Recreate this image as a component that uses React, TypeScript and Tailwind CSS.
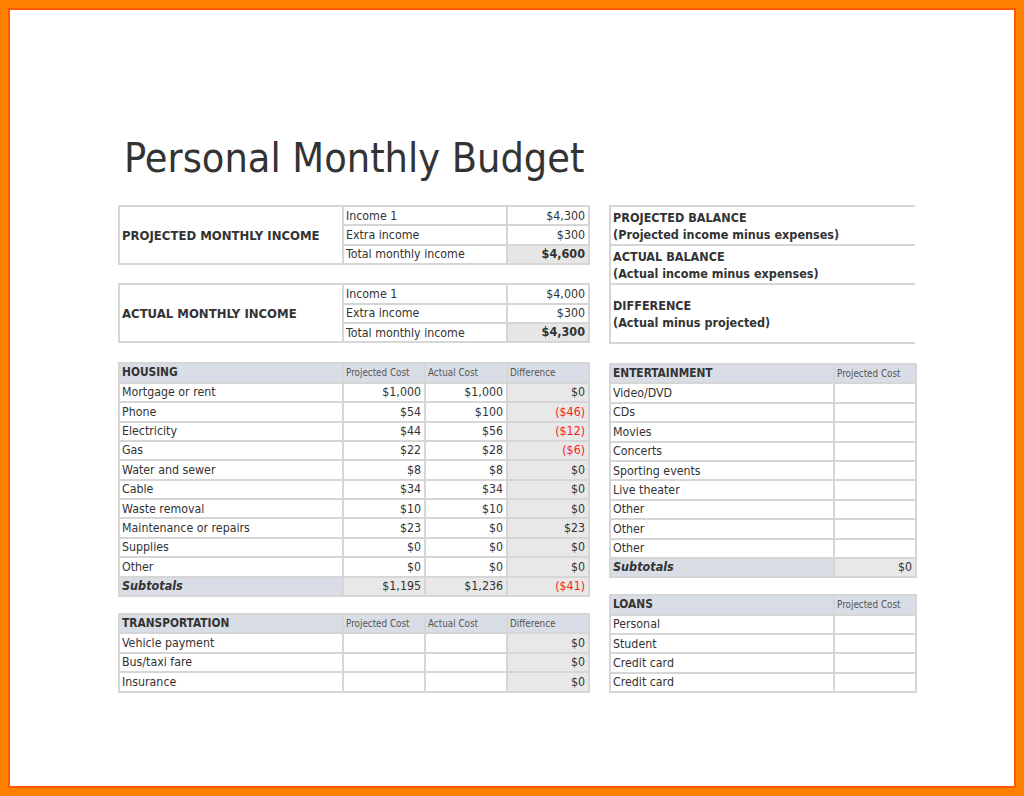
const font = { fontFamily: 'Tahoma, "DejaVu Sans Condensed", "DejaVu Sans", sans-serif' };

type Row = [string, string, string, string, boolean?];

const housing: Row[] = [
  ['Mortgage or rent', '$1,000', '$1,000', '$0'],
  ['Phone', '$54', '$100', '($46)', true],
  ['Electricity', '$44', '$56', '($12)', true],
  ['Gas', '$22', '$28', '($6)', true],
  ['Water and sewer', '$8', '$8', '$0'],
  ['Cable', '$34', '$34', '$0'],
  ['Waste removal', '$10', '$10', '$0'],
  ['Maintenance or repairs', '$23', '$0', '$23'],
  ['Supplies', '$0', '$0', '$0'],
  ['Other', '$0', '$0', '$0'],
];

const transport: Row[] = [
  ['Vehicle payment', '', '', '$0'],
  ['Bus/taxi fare', '', '', '$0'],
  ['Insurance', '', '', '$0'],
];

const entertainment = ['Video/DVD', 'CDs', 'Movies', 'Concerts', 'Sporting events', 'Live theater', 'Other', 'Other', 'Other'];
const loans = ['Personal', 'Student', 'Credit card', 'Credit card'];

const cell = 'border-2 border-[#d6d6d6] h-[19.4px] p-0 leading-none';

const IncomeBox = ({ title, rows, total }: { title: string; rows: [string, string][]; total: string }) => (
  <table className="w-[470px] border-collapse table-fixed text-[12.3px] text-[#333]">
    <colgroup>
      <col className="w-[224px]" />
      <col className="w-[164px]" />
      <col className="w-[82px]" />
    </colgroup>
    <tbody>
      <tr>
        <td rowSpan={3} className={`${cell} pl-[2px] font-bold text-[13px]`}>{title}</td>
        <td className={`${cell} pl-[2px]`}>{rows[0][0]}</td>
        <td className={`${cell} pr-[3px] text-right`}>{rows[0][1]}</td>
      </tr>
      <tr>
        <td className={`${cell} pl-[2px]`}>{rows[1][0]}</td>
        <td className={`${cell} pr-[3px] text-right`}>{rows[1][1]}</td>
      </tr>
      <tr>
        <td className={`${cell} pl-[2px]`}>Total monthly income</td>
        <td className={`${cell} pr-[3px] text-right font-bold text-[12.5px] bg-[#e6e6e6]`}>{total}</td>
      </tr>
    </tbody>
  </table>
);

const CostTable = ({ title, rows, subtotal }: { title: string; rows: Row[]; subtotal?: Row }) => (
  <table className="w-[470px] border-collapse table-fixed text-[12.3px] text-[#333]">
    <colgroup>
      <col className="w-[224px]" />
      <col className="w-[82px]" />
      <col className="w-[82px]" />
      <col className="w-[82px]" />
    </colgroup>
    <tbody>
      <tr className="bg-[#d9dde6]">
        <td className={`${cell} pl-[2px] font-bold text-[11.8px]`}>{title}</td>
        <td className={`${cell} pl-[2px] text-[9.8px] text-[#555]`}>Projected Cost</td>
        <td className={`${cell} pl-[2px] text-[9.8px] text-[#555]`}>Actual Cost</td>
        <td className={`${cell} pl-[2px] text-[9.8px] text-[#555]`}>Difference</td>
      </tr>
      {rows.map((r, i) => (
        <tr key={i}>
          <td className={`${cell} pl-[2px]`}>{r[0]}</td>
          <td className={`${cell} pr-[3px] text-right`}>{r[1]}</td>
          <td className={`${cell} pr-[3px] text-right`}>{r[2]}</td>
          <td className={`${cell} pr-[3px] text-right bg-[#e8e8e8] ${r[4] ? 'text-[#ff1a1a]' : ''}`}>{r[3]}</td>
        </tr>
      ))}
      {subtotal && (
        <tr>
          <td className={`${cell} pl-[2px] font-bold italic text-[12.5px] bg-[#d9dde6]`}>{subtotal[0]}</td>
          <td className={`${cell} pr-[3px] text-right bg-[#e8e8e8]`}>{subtotal[1]}</td>
          <td className={`${cell} pr-[3px] text-right bg-[#e8e8e8]`}>{subtotal[2]}</td>
          <td className={`${cell} pr-[3px] text-right bg-[#e8e8e8] ${subtotal[4] ? 'text-[#ff1a1a]' : ''}`}>{subtotal[3]}</td>
        </tr>
      )}
    </tbody>
  </table>
);

const SingleTable = ({ title, rows, subtotal }: { title: string; rows: string[]; subtotal?: string }) => (
  <table className="w-[306px] border-collapse table-fixed text-[12.3px] text-[#333]">
    <colgroup>
      <col className="w-[224px]" />
      <col className="w-[82px]" />
    </colgroup>
    <tbody>
      <tr className="bg-[#d9dde6]">
        <td className={`${cell} pl-[2px] font-bold text-[11.8px]`}>{title}</td>
        <td className={`${cell} pl-[2px] text-[9.8px] text-[#555]`}>Projected Cost</td>
      </tr>
      {rows.map((r, i) => (
        <tr key={i}>
          <td className={`${cell} pl-[2px]`}>{r}</td>
          <td className={cell}></td>
        </tr>
      ))}
      {subtotal && (
        <tr>
          <td className={`${cell} pl-[2px] font-bold italic text-[12.5px] bg-[#d9dde6]`}>Subtotals</td>
          <td className={`${cell} pr-[3px] text-right bg-[#e8e8e8]`}>{subtotal}</td>
        </tr>
      )}
    </tbody>
  </table>
);

const BalanceBox = () => (
  <div className="w-[306px] border-l-2 border-t-2 border-b-2 border-[#d6d6d6] text-[12.5px] font-bold text-[#333] leading-[17px]">
    <div className="h-[39px] flex flex-col justify-center pl-[2px] border-b-2 border-[#d6d6d6]">
      <div>PROJECTED BALANCE</div>
      <div>(Projected income minus expenses)</div>
    </div>
    <div className="h-[39px] flex flex-col justify-center pl-[2px] border-b-2 border-[#d6d6d6]">
      <div>ACTUAL BALANCE</div>
      <div>(Actual income minus expenses)</div>
    </div>
    <div className="h-[57px] flex flex-col justify-center pl-[2px]">
      <div>DIFFERENCE</div>
      <div>(Actual minus projected)</div>
    </div>
  </div>
);

export default function App() {
  return (
    <div className="w-[1024px] h-[796px] bg-[#ff7f00] p-[8px]" style={font}>
      <div className="h-full border-2 border-[#ff5a00] bg-white pl-[108px] pt-[124px]">
        <h1 className="text-[41px] leading-[48px] text-[#333] ml-[6px] font-normal">Personal Monthly Budget</h1>
        <div className="flex gap-[19px] mt-[23px]">
          <div className="flex flex-col">
            <IncomeBox title="PROJECTED MONTHLY INCOME" rows={[['Income 1', '$4,300'], ['Extra income', '$300']]} total="$4,600" />
            <div className="mt-[18px]">
              <IncomeBox title="ACTUAL MONTHLY INCOME" rows={[['Income 1', '$4,000'], ['Extra income', '$300']]} total="$4,300" />
            </div>
            <div className="mt-[19px]">
              <CostTable title="HOUSING" rows={housing} subtotal={['Subtotals', '$1,195', '$1,236', '($41)', true]} />
            </div>
            <div className="mt-[16px]">
              <CostTable title="TRANSPORTATION" rows={transport} />
            </div>
          </div>
          <div className="flex flex-col">
            <BalanceBox />
            <div className="mt-[19px]">
              <SingleTable title="ENTERTAINMENT" rows={entertainment} subtotal="$0" />
            </div>
            <div className="mt-[16px]">
              <SingleTable title="LOANS" rows={loans} />
            </div>
          </div>
        </div>
      </div>
    </div>
  );
}
